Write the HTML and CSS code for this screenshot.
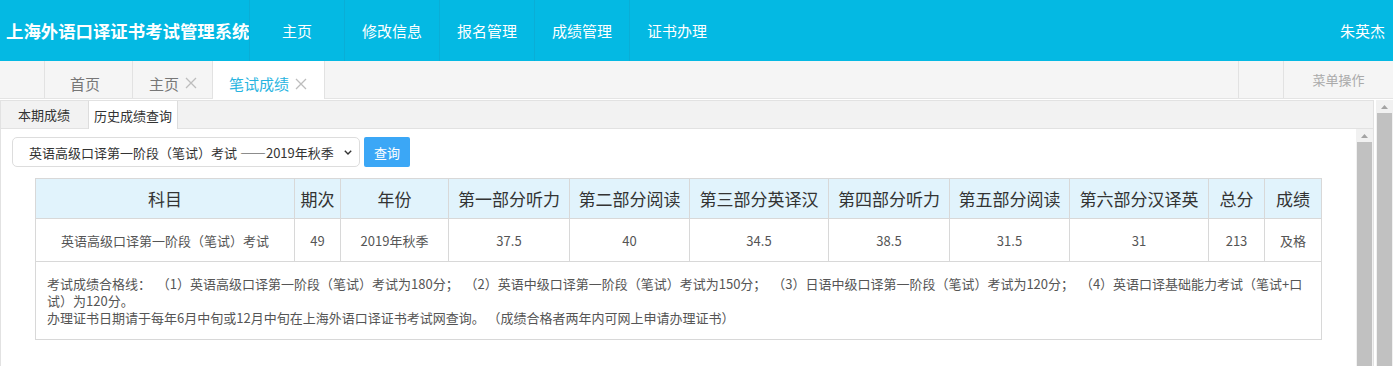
FILE: index.html
```html
<!DOCTYPE html>
<html lang="zh-CN">
<head>
  <meta charset="UTF-8" />
  <title>上海外语口译证书考试管理系统</title>
  <link rel="stylesheet" href="styles.css">
</head>
<body>
  <header class="topbar">
    <div class="brand">上海外语口译证书考试管理系统</div>
    <nav class="mainnav">
      <a>主页</a>
      <a>修改信息</a>
      <a>报名管理</a>
      <a>成绩管理</a>
      <a>证书办理</a>
    </nav>
    <div class="user">朱英杰</div>
  </header>

  <!-- page tabs -->
  <div class="tabbar">
    <div class="tab-prev"></div>
    <div class="tab home">首页</div>
    <div class="tab">主页<svg class="close" viewBox="0 0 12 12"><path d="M1 1L11 11M11 1L1 11" /></svg></div>
    <div class="tab active">笔试成绩<svg class="close" viewBox="0 0 12 12"><path d="M1 1L11 11M11 1L1 11" /></svg></div>
    <div class="tab-fill"></div>
    <div class="tab-next"></div>
    <div class="tab-menu">菜单操作</div>
  </div>

  <div class="workspace">
    <div class="panel">
      <div class="subtabs">
        <div class="subtab">本期成绩</div>
        <div class="subtab active">历史成绩查询</div>
      </div>
      <div class="panel-body">
        <div class="content">
          <form class="query" onsubmit="return false">
            <div class="select-wrap">
              <select class="exam-select">
                <option>英语高级口译第一阶段（笔试）考试 ——2019年秋季</option>
              </select>
              <svg class="chevron" viewBox="0 0 8 5"><path d="M0.8 0.8L4 4L7.2 0.8" /></svg>
            </div>
            <button type="submit" class="btn-query">查询</button>
          </form>

          <table class="score-table">
            <colgroup>
              <col style="width:259px"><col style="width:46px"><col style="width:108px">
              <col style="width:121px"><col style="width:120px"><col style="width:139px">
              <col style="width:121px"><col style="width:120px"><col style="width:139px">
              <col style="width:56px"><col style="width:57px">
            </colgroup>
            <thead>
              <tr>
                <th>科目</th><th>期次</th><th>年份</th><th>第一部分听力</th><th>第二部分阅读</th>
                <th>第三部分英译汉</th><th>第四部分听力</th><th>第五部分阅读</th><th>第六部分汉译英</th>
                <th>总分</th><th>成绩</th>
              </tr>
            </thead>
            <tbody>
              <tr>
                <td>英语高级口译第一阶段（笔试）考试</td><td>49</td><td>2019年秋季</td><td>37.5</td><td>40</td>
                <td>34.5</td><td>38.5</td><td>31.5</td><td>31</td><td>213</td><td>及格</td>
              </tr>
              <tr>
                <td colspan="11" class="notes">
                  <div>考试成绩合格线：&nbsp;&nbsp;（1）英语高级口译第一阶段（笔试）考试为180分；&nbsp;&nbsp;（2）英语中级口译第一阶段（笔试）考试为150分；&nbsp;&nbsp;（3）日语中级口译第一阶段（笔试）考试为120分；&nbsp;&nbsp;（4）英语口译基础能力考试（笔试+口试）为120分。</div>
                  <div>办理证书日期请于每年6月中旬或12月中旬在上海外语口译证书考试网查询。&nbsp;（成绩合格者两年内可网上申请办理证书）</div>
                </td>
              </tr>
            </tbody>
          </table>
        </div>
        <div class="vscroll">
          <div class="arrow"><svg viewBox="0 0 7 4"><path d="M0 4L3.5 0L7 4Z" /></svg></div>
          <div class="thumb"></div>
        </div>
      </div>
    </div>
    <div class="vscroll outer">
      <div class="arrow"><svg viewBox="0 0 7 4"><path d="M0 4L3.5 0L7 4Z" /></svg></div>
      <div class="thumb"></div>
    </div>
  </div>
</body>
</html>
```

FILE: styles.css
```css
* {
  box-sizing: border-box;
}

html, body {
  height: 366px;
  overflow: hidden;
}

body {
  margin: 0;
  font-family: "Noto Sans CJK SC", "Microsoft YaHei", sans-serif;
  color: #333;
  background: #fff;
}

/* top bar */
.topbar {
  height: 61px;
  background: #04b9e3;
  color: #fff;
  display: flex;
}

.brand {
  width: 249px;
  padding-left: 6px;
  font-size: 17.4px;
  font-weight: bold;
  display: flex;
  align-items: center;
  white-space: nowrap;
}

.mainnav {
  display: flex;
}

.mainnav a {
  width: 95px;
  border-left: 1px solid #0aaed6;
  display: flex;
  align-items: center;
  justify-content: center;
  font-size: 15px;
  color: #fff;
  cursor: pointer;
}

.user {
  margin-left: auto;
  padding-right: 8px;
  font-size: 15px;
  display: flex;
  align-items: center;
}

/* page tabs */
.tabbar {
  height: 38px;
  background: #f5f5f5;
  border-bottom: 1px solid #e4e4e4;
  display: flex;
}

.tab-prev {
  width: 45px;
  border-right: 1px solid #e2e2e2;
}

.tab {
  display: flex;
  align-items: center;
  padding: 7px 15px 0 16px;
  font-size: 15px;
  color: #777;
  border-right: 1px solid #e2e2e2;
  white-space: nowrap;
}

.tab.home {
  padding-left: 25px;
  padding-right: 32px;
}

.tab.active {
  background: #fff;
  color: #27b4df;
  margin-bottom: -1px;
  padding-right: 17px;
}

.tab .close {
  width: 12px;
  height: 12px;
  margin-left: 6px;
  fill: none;
  stroke: #bdbdbd;
  stroke-width: 1.3;
}

.tab-fill {
  flex: 1;
}

.tab-next {
  width: 45px;
  border-left: 1px solid #e2e2e2;
}

.tab-menu {
  width: 110px;
  border-left: 1px solid #e2e2e2;
  display: flex;
  align-items: center;
  justify-content: center;
  font-size: 13px;
  color: #aaa;
}

/* work area */
.workspace {
  height: 267px;
  padding-top: 1px;
  display: flex;
  gap: 2px;
}

.panel {
  width: 1374px;
  border: 1px solid #e2e2e2;
  border-bottom: none;
  display: flex;
  flex-direction: column;
}

.subtabs {
  height: 28px;
  background: #f2f2f2;
  border-bottom: 1px solid #e2e2e2;
  display: flex;
  gap: 12px;
  padding-left: 11px;
}

.subtab {
  display: flex;
  align-items: center;
  padding: 0 6px;
  font-size: 13px;
  color: #333;
}

.subtab.active {
  background: #fff;
  border-left: 1px solid #ddd;
  border-right: 1px solid #ddd;
  margin-bottom: -1px;
  padding: 0 5px;
}

.panel-body {
  flex: 1;
  display: flex;
  min-height: 0;
}

.content {
  flex: 1;
  padding: 8px 0 0 11px;
}

/* query form */
.query {
  display: flex;
  gap: 4px;
}

.select-wrap {
  position: relative;
  width: 348px;
  height: 30px;
}

.exam-select {
  appearance: none;
  width: 100%;
  height: 100%;
  border: 1px solid #ddd;
  border-radius: 5px;
  background: #fff;
  padding: 0 0 0 16px;
  font-family: inherit;
  font-size: 13px;
  color: #333;
}

.chevron {
  position: absolute;
  right: 8px;
  top: 13px;
  width: 8px;
  height: 5px;
  fill: none;
  stroke: #333;
  stroke-width: 1.4;
}

.btn-query {
  width: 46px;
  height: 30px;
  border: none;
  border-radius: 2px;
  background: #3ba7f6;
  color: #fff;
  font-family: inherit;
  font-size: 13px;
  cursor: pointer;
}

/* score table */
.score-table {
  width: 1286px;
  margin: 11px 0 0 23px;
  border-collapse: collapse;
  table-layout: fixed;
}

.score-table th,
.score-table td {
  border: 1px solid #d8d8d8;
  text-align: center;
  padding: 0;
  white-space: nowrap;
}

.score-table th {
  height: 40px;
  background: #e1f3fc;
  font-size: 17px;
  font-weight: normal;
  color: #333;
}

.score-table td {
  height: 43px;
  font-size: 13px;
  color: #555;
}

.score-table td.notes {
  height: auto;
  text-align: left;
  white-space: normal;
  text-spacing-trim: space-all;
  padding: 13px 8px 13px 11px;
  font-size: 13px;
  line-height: 17px;
}

/* fake scrollbars */
.vscroll {
  width: 17px;
  background: #f1f1f1;
  display: flex;
  flex-direction: column;
}

.vscroll .arrow {
  height: 13px;
  display: flex;
  align-items: center;
  justify-content: center;
}

.vscroll .arrow svg {
  width: 7px;
  height: 4px;
  fill: #a3a3a3;
}

.vscroll .thumb {
  flex: 1;
  margin: 0 1px;
  background: #c1c1c1;
}
```
